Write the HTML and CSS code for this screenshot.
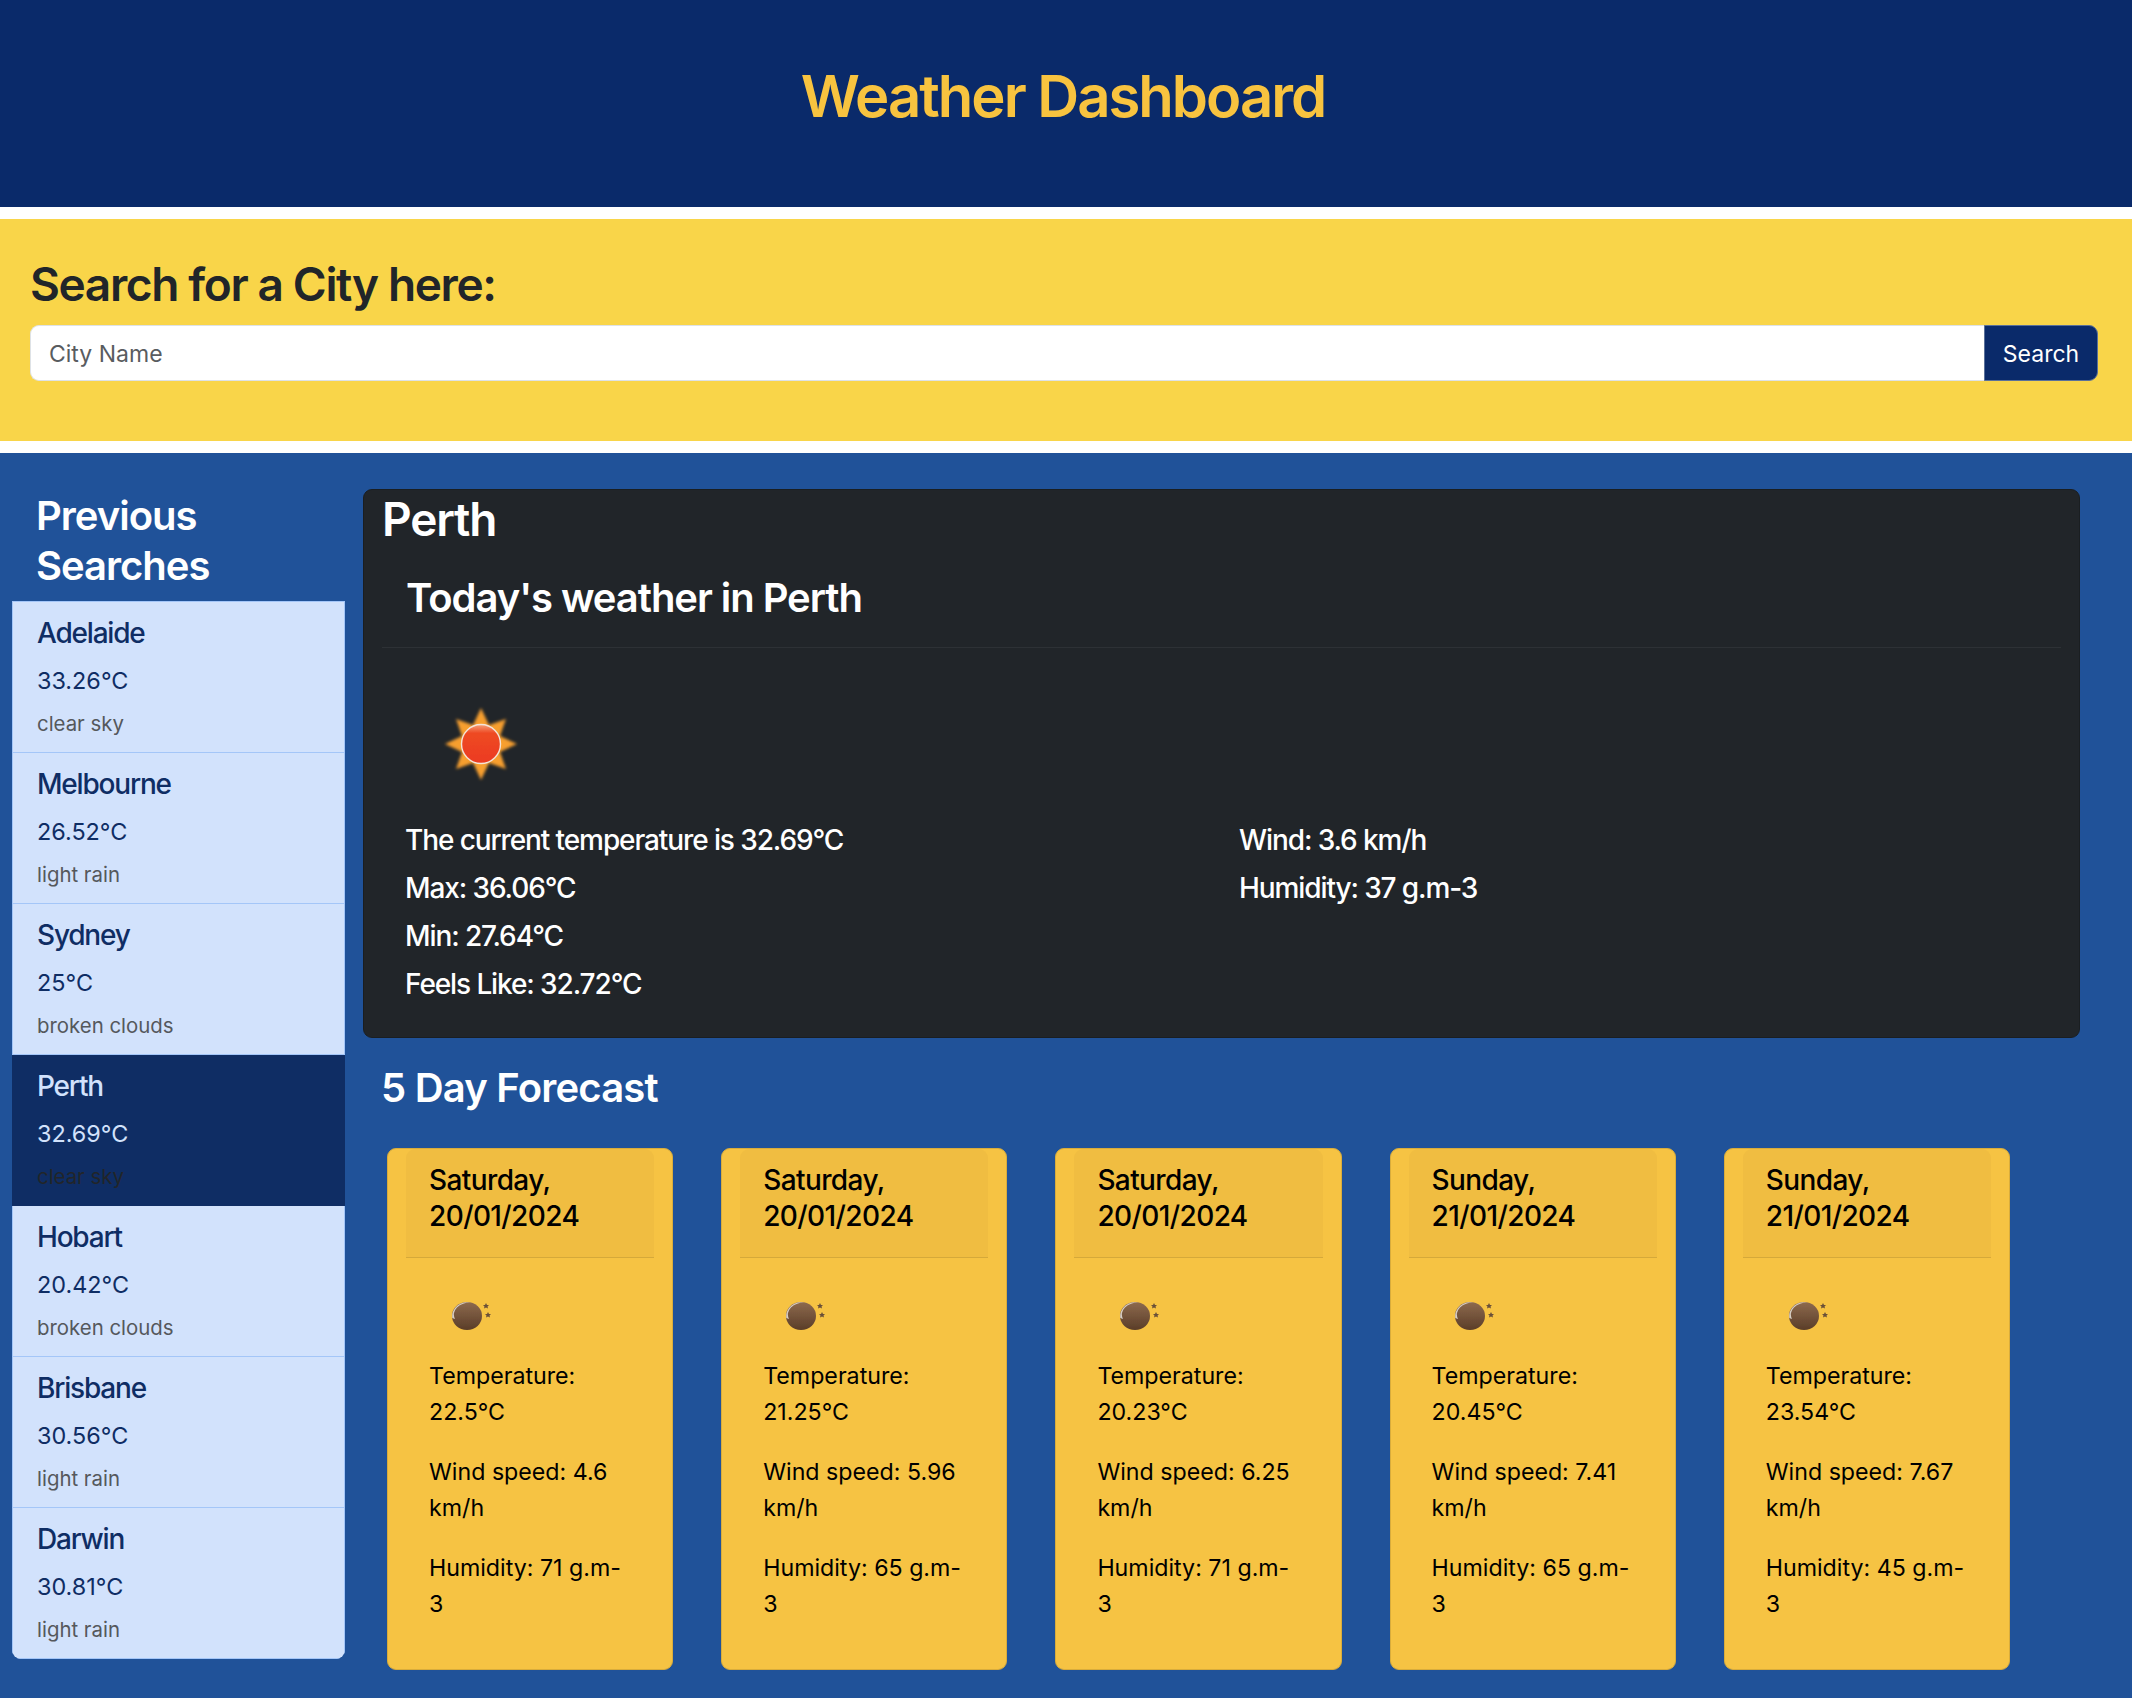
FILE: index.html
```html
<!DOCTYPE html>
<html lang="en">
<head>
    <meta charset="UTF-8">
    <title>Weather Dashboard</title>
    <link rel="stylesheet" href="styles.css">
</head>
<body>
    <svg class="defs" width="0" height="0">
        <defs>
            <linearGradient id="sunDisc" x1="0" y1="0" x2="0" y2="1">
                <stop offset="0%" stop-color="#f6a078"/>
                <stop offset="22%" stop-color="#ee4a24"/>
                <stop offset="100%" stop-color="#ec3a20"/>
            </linearGradient>
            <linearGradient id="ball" x1="0" y1="0" x2="0" y2="1">
                <stop offset="0%" stop-color="#8d6a4e"/>
                <stop offset="100%" stop-color="#5a3d28"/>
            </linearGradient>
            <filter id="soft"><feGaussianBlur stdDeviation="1.5"/></filter>
            <filter id="softer"><feGaussianBlur stdDeviation="0.5"/></filter>
            <symbol id="sun" viewBox="0 0 100 100">
                <path d="M50 14 L58 31 L75 25 L69 42 L86 50 L69 58 L75 75 L58 69 L50 86 L42 69 L25 75 L31 58 L14 50 L31 42 L25 25 L42 31 Z" fill="#f79f2e" filter="url(#soft)"/>
                <circle cx="50" cy="50" r="19.5" fill="url(#sunDisc)" stroke="#f4e4d8" stroke-width="1.4" filter="url(#softer)"/>
            </symbol>
            <symbol id="ball-icon" viewBox="0 0 75 75">
                <ellipse cx="37" cy="34" rx="15" ry="14" fill="url(#ball)" filter="url(#softer)"/>
                <path d="M22.3 36 A15 14 0 0 1 41 20.6 A16 12 0 0 0 25 37 Z" fill="#d8cfc4" filter="url(#softer)"/>
                <path d="M56 21 l1 2 2 0 -1.5 1.5 .5 2 -2 -1 -2 1 .5 -2 -1.5 -1.5 2 0 Z" fill="#6a5038"/>
                <path d="M58 30 l1 2 2 0 -1.5 1.5 .5 2 -2 -1 -2 1 .5 -2 -1.5 -1.5 2 0 Z" fill="#6a5038"/>
            </symbol>
        </defs>
    </svg>

    <header class="page-header">
        <h1>Weather Dashboard</h1>
    </header>

    <section class="search-box">
        <h2>Search for a City here:</h2>
        <form class="search-form">
            <input type="text" class="search-input" placeholder="City Name">
            <button type="button" class="search-btn">Search</button>
        </form>
    </section>

    <main class="content">
        <aside class="sidebar">
            <h3>Previous Searches</h3>
            <ul class="history">
                <li class="history-item">
                    <h5>Adelaide</h5>
                    <p>33.26°C</p>
                    <small>clear sky</small>
                </li>
                <li class="history-item">
                    <h5>Melbourne</h5>
                    <p>26.52°C</p>
                    <small>light rain</small>
                </li>
                <li class="history-item">
                    <h5>Sydney</h5>
                    <p>25°C</p>
                    <small>broken clouds</small>
                </li>
                <li class="history-item active">
                    <h5>Perth</h5>
                    <p>32.69°C</p>
                    <small>clear sky</small>
                </li>
                <li class="history-item">
                    <h5>Hobart</h5>
                    <p>20.42°C</p>
                    <small>broken clouds</small>
                </li>
                <li class="history-item">
                    <h5>Brisbane</h5>
                    <p>30.56°C</p>
                    <small>light rain</small>
                </li>
                <li class="history-item">
                    <h5>Darwin</h5>
                    <p>30.81°C</p>
                    <small>light rain</small>
                </li>
            </ul>
        </aside>

        <div class="results">
            <section class="today">
                <h2 class="today-city">Perth</h2>
                <h3 class="today-title">Today's weather in Perth</h3>
                <div class="today-body">
                    <svg class="today-icon"><use href="#sun"/></svg>
                    <div class="today-stats">
                        <div>
                            <p>The current temperature is 32.69°C</p>
                            <p>Max: 36.06°C</p>
                            <p>Min: 27.64°C</p>
                            <p>Feels Like: 32.72°C</p>
                        </div>
                        <div>
                            <p>Wind: 3.6 km/h</p>
                            <p>Humidity: 37 g.m-3</p>
                        </div>
                    </div>
                </div>
            </section>

            <h3 class="forecast-title">5 Day Forecast</h3>
            <div class="forecast">
                <article class="day-card">
                    <h5 class="day-head">Saturday, 20/01/2024</h5>
                    <div class="day-body">
                        <svg class="day-icon"><use href="#ball-icon"/></svg>
                        <p>Temperature: 22.5°C</p>
                        <p>Wind speed: 4.6 km/h</p>
                        <p>Humidity: 71 g.m-<wbr>3</p>
                    </div>
                </article>
                <article class="day-card">
                    <h5 class="day-head">Saturday, 20/01/2024</h5>
                    <div class="day-body">
                        <svg class="day-icon"><use href="#ball-icon"/></svg>
                        <p>Temperature: 21.25°C</p>
                        <p>Wind speed: 5.96 km/h</p>
                        <p>Humidity: 65 g.m-<wbr>3</p>
                    </div>
                </article>
                <article class="day-card">
                    <h5 class="day-head">Saturday, 20/01/2024</h5>
                    <div class="day-body">
                        <svg class="day-icon"><use href="#ball-icon"/></svg>
                        <p>Temperature: 20.23°C</p>
                        <p>Wind speed: 6.25 km/h</p>
                        <p>Humidity: 71 g.m-<wbr>3</p>
                    </div>
                </article>
                <article class="day-card">
                    <h5 class="day-head">Sunday, 21/01/2024</h5>
                    <div class="day-body">
                        <svg class="day-icon"><use href="#ball-icon"/></svg>
                        <p>Temperature: 20.45°C</p>
                        <p>Wind speed: 7.41 km/h</p>
                        <p>Humidity: 65 g.m-<wbr>3</p>
                    </div>
                </article>
                <article class="day-card">
                    <h5 class="day-head">Sunday, 21/01/2024</h5>
                    <div class="day-body">
                        <svg class="day-icon"><use href="#ball-icon"/></svg>
                        <p>Temperature: 23.54°C</p>
                        <p>Wind speed: 7.67 km/h</p>
                        <p>Humidity: 45 g.m-<wbr>3</p>
                    </div>
                </article>
            </div>
        </div>
    </main>
</body>
</html>
```

FILE: styles.css
```css
* {
    box-sizing: border-box;
}
body {
    margin: 0;
    font-family: Inter, "Noto Sans", sans-serif;
    font-size: 23px;
    line-height: 36px;
    color: #212529;
    background-color: #fff;
}
h1, h2, h3, h5, p, ul {
    margin: 0;
    padding: 0;
}
.defs {
    position: absolute;
}
.page-header {
    height: 207px;
    margin-bottom: 12px;
    padding: 60px 6px 0 0;
    text-align: center;
    background-color: #0a2a6a;
}
.page-header h1 {
    font-size: 58px;
    line-height: 72px;
    font-weight: 600;
    letter-spacing: -2px;
    color: #f8c33f;
}
.search-box {
    height: 222px;
    margin-bottom: 12px;
    padding: 36px 30px 0;
    background-color: #f9d549;
}
.search-box h2 {
    font-size: 46px;
    line-height: 58px;
    font-weight: 600;
    letter-spacing: -1.35px;
    margin-bottom: 12px;
}
.search-form {
    display: flex;
    width: 2068px;
}
.search-input {
    flex: 1;
    height: 56px;
    padding: 1px 18px 0;
    border: 1px solid #dee2e6;
    border-right: none;
    border-radius: 9px 0 0 9px;
    font-family: inherit;
    font-size: 23px;
    background: #fff;
    outline: none;
}
.search-input::placeholder {
    color: #595c5f;
}
.search-btn {
    width: 114px;
    height: 56px;
    padding: 1px 0 0;
    border: 1px solid #5a7099;
    border-radius: 0 9px 9px 0;
    font-family: inherit;
    font-size: 23px;
    color: #fff;
    background-color: #0a2a6a;
}
.content {
    display: flex;
    min-height: 1245px;
    background-color: #205299;
}
.sidebar {
    width: 333px;
    margin-left: 12px;
    flex-shrink: 0;
    padding-top: 38px;
}
.sidebar h3 {
    padding: 0 24px;
    font-size: 40px;
    line-height: 50px;
    font-weight: 600;
    letter-spacing: -1px;
    color: #fff;
}
.history {
    list-style: none;
    margin-top: 10px;
    border-radius: 0 0 9px 9px;
    overflow: hidden;
}
.history-item {
    height: 151px;
    padding: 13px 24px 0;
    background-color: #d2e2fc;
    border: 1px solid #a4c6f8;
    border-top: none;
    color: #0f2d64;
}
.history-item:first-child {
    height: 152px;
    border-top: 1px solid #a4c6f8;
}
.history-item h5 {
    font-size: 28px;
    line-height: 36px;
    font-weight: 500;
    letter-spacing: -1.2px;
    margin-bottom: 12px;
}
.history-item p {
    margin-bottom: 10px;
    font-size: 23.4px;
}
.history-item small {
    display: block;
    font-size: 20.4px;
    line-height: 30px;
    color: #55585c;
}
.history-item.active {
    border-color: #0f2d64;
    background-color: #0f2d64;
    color: #d2e2fc;
}
.history-item.active small {
    color: #212529;
}
.results {
    flex: 1;
    padding: 36px 52px 0 18px;
    min-width: 0;
}
.today {
    height: 549px;
    padding: 0 18px;
    border: 1px solid #1a1e21;
    border-radius: 9px;
    color: #fff;
    background-color: #212529;
}
.today-city {
    font-size: 46px;
    line-height: 58px;
    font-weight: 600;
    letter-spacing: -1.2px;
}
.today-title {
    height: 100px;
    padding: 21px 24px 0;
    font-size: 40px;
    line-height: 58px;
    font-weight: 600;
    letter-spacing: -1.05px;
    border-bottom: 1px solid #2d3135;
}
.today-body {
    padding: 0 23px;
}
.today-icon {
    display: block;
    width: 100px;
    height: 100px;
    margin: 46px 0 0 26px;
}
.today-stats {
    display: grid;
    grid-template-columns: 834px 1fr;
    margin-top: 21px;
    padding-top: 1px;
    font-size: 28px;
    line-height: 48px;
    font-weight: 500;
    letter-spacing: -1.1px;
}
.forecast-title {
    margin: 25px 0 35px;
    padding-left: 18px;
    font-size: 40px;
    line-height: 50px;
    font-weight: 600;
    letter-spacing: -0.8px;
    color: #fff;
}
.forecast {
    display: flex;
    gap: 48px;
    padding-left: 24px;
}
.day-card {
    width: 286.2px;
    height: 522px;
    padding: 0 18px;
    border: 1px solid #d9ac3b;
    border-radius: 9px;
    color: #000;
    background-color: #f6c343;
}
.day-head {
    height: 109px;
    padding: 13px 24px 0 23px;
    font-size: 28px;
    line-height: 36px;
    font-weight: 500;
    letter-spacing: -0.6px;
    border-radius: 9px 9px 0 0;
    border-bottom: 1px solid #d5a93a;
    background-color: #f0bd41;
}
.day-body {
    padding: 24px 24px 0 23px;
    font-size: 23.2px;
}
.day-icon {
    display: block;
    width: 75px;
    height: 75px;
    margin: 0 0 1px 1px;
}
.day-body p {
    margin-bottom: 24px;
}
```
